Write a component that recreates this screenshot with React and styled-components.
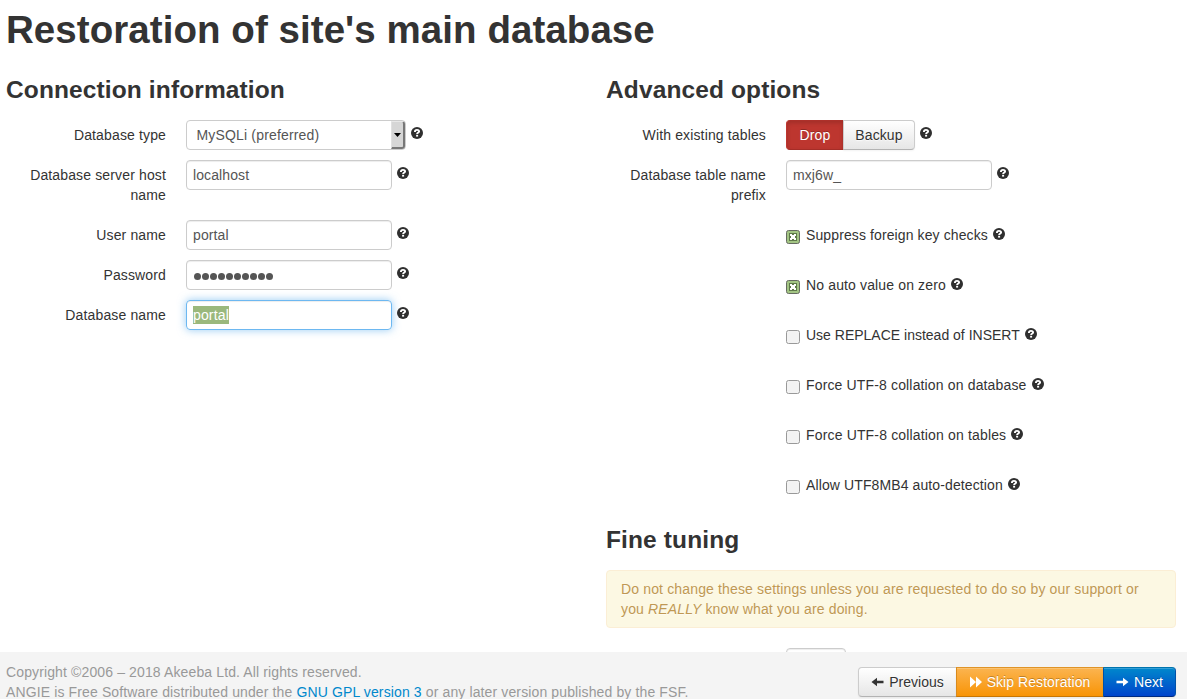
import React from "react";
import styled, { createGlobalStyle, css } from "styled-components";

const Global = createGlobalStyle`
  *, *::before, *::after { box-sizing: border-box; }
  html, body { margin: 0; height: 699px; overflow: hidden; background: #fff; }
  body { font: 14px/20px "Liberation Sans", Arial, sans-serif; color: #333; }
  button, input { font: inherit; }
`;
const Page = styled.div`
  height: 699px;
  display: flex;
  flex-direction: column;
`;
const Main = styled.main`
  flex: none;
  height: 652px;
  overflow: hidden;
  padding: 10px 11px 0 6px;
`;
const Title = styled.h1`
  margin: 0;
  font-size: 38.5px;
  line-height: 40px;
  letter-spacing: 0.06px;
`;
const Columns = styled.div`
  display: grid;
  grid-template-columns: 570px 570px;
  column-gap: 30px;
  margin-top: 20px;
`;
const Heading = styled.h3`
  margin: 0 0 10px;
  font-size: 24.5px;
  line-height: 40px;
  letter-spacing: 0.12px;
`;
const Group = styled.div`
  display: flex;
  align-items: flex-start;
  min-height: 30px;
  margin-bottom: 10px;
`;
const Label = styled.label`
  flex: none;
  width: 160px;
  margin-right: 20px;
  padding-top: 5px;
  padding-bottom: ${(p) => (p.$tall ? 5 : 0)}px;
  text-align: right;
  letter-spacing: 0.14px;
`;
const Field = styled.input`
  width: ${(p) => p.$width || 206}px;
  height: 30px;
  padding: 4px 6px;
  border: 1px solid #ccc;
  border-radius: 4px;
  outline: none;
  background: #fff;
  color: #555;
  letter-spacing: 0.1px;
  box-shadow: inset 0 1px 1px rgba(0, 0, 0, 0.075);
`;
const FocusedField = styled.div`
  width: 206px;
  height: 30px;
  padding: 4px 6px;
  border: 1px solid #6db8f1;
  border-radius: 4px;
  box-shadow: inset 0 1px 1px rgba(0, 0, 0, 0.075), 0 0 8px rgba(82, 168, 236, 0.6);
`;
const Selected = styled.span`
  display: inline-block;
  height: 18px;
  line-height: 18px;
  margin-top: 1px;
  vertical-align: top;
  background: #9ab87c;
  color: #fff;
  letter-spacing: 0.15px;
`;
const Dots = styled.div`
  display: flex;
  align-items: center;
  gap: 1px;
  width: 206px;
  height: 30px;
  padding: 2px 6.5px 0;
  border: 1px solid #ccc;
  border-radius: 4px;
  box-shadow: inset 0 1px 1px rgba(0, 0, 0, 0.075);
`;
const Dot = styled.i`
  width: 7px;
  height: 7px;
  border-radius: 50%;
  background: #555;
`;
const Select = styled.div`
  display: flex;
  justify-content: space-between;
  width: 220px;
  height: 30px;
  padding-left: 9.5px;
  line-height: 28px;
  border: 1px solid #ccc;
  border-radius: 4px;
  color: #555;
  letter-spacing: 0.17px;
`;
const Arrow = styled.span`
  display: flex;
  align-items: center;
  justify-content: center;
  width: 14px;
  height: 28px;
  background: #d6d6d6;
  border: solid;
  border-width: 1px 2px 2px 1px;
  border-color: #e8e8e8 #777 #777 #e0e0e0;
  border-radius: 0 3px 3px 0;
`;
const HelpSvg = styled.svg`
  flex: none;
  display: block;
  width: 12px;
  height: 12px;
  margin: ${(p) => p.$top}px 0 0 ${(p) => p.$left}px;
`;
const ButtonGroup = styled.div`
  display: flex;
`;
const kinds = {
  plain: css`
    color: #333;
    background: linear-gradient(#fff, #e6e6e6);
    border-color: #ccc #ccc #b3b3b3;
    text-shadow: 0 1px 1px rgba(255, 255, 255, 0.75);
  `,
  danger: css`
    background: #bd362f;
    border-color: #ad302a #bd362f #a52d27;
    box-shadow: inset 0 2px 4px rgba(0, 0, 0, 0.15);
  `,
  warning: css`
    background: linear-gradient(#fbb450, #f89406);
    border-color: #df9428 #d98a1c #c67605;
  `,
  primary: css`
    background: linear-gradient(#0088cc, #0044cc);
    border-color: #0074ad #0052a8 #002a80;
  `,
};
const Button = styled.button`
  display: flex;
  align-items: center;
  justify-content: center;
  width: ${(p) => p.$width}px;
  height: 30px;
  padding: 0;
  gap: 5px;
  border: 1px solid;
  color: #fff;
  letter-spacing: ${(p) => p.$spacing || 0}px;
  text-shadow: 0 -1px 0 rgba(0, 0, 0, 0.25);
  box-shadow: inset 0 1px 0 rgba(255, 255, 255, 0.2), 0 1px 2px rgba(0, 0, 0, 0.05);
  white-space: nowrap;
  ${(p) => kinds[p.$kind]}
  & + & { margin-left: -1px; }
  &:first-child { border-radius: 4px 0 0 4px; }
  &:last-child { border-radius: 0 4px 4px 0; }
`;
const CheckRow = styled.label`
  display: flex;
  align-items: flex-start;
  height: 50px;
  padding: 5px 0 0 180px;
  letter-spacing: ${(p) => p.$spacing}px;
`;
const Box = styled.svg`
  flex: none;
  width: 14px;
  height: 14px;
  margin: 5px 6px 0 0;
`;
const Alert = styled.div`
  height: 58px;
  padding: 8px 30px 8px 14px;
  margin-bottom: 20px;
  border: 1px solid #fbeed5;
  border-radius: 4px;
  background: #fcf8e3;
  color: #c09853;
  letter-spacing: 0.15px;
  text-shadow: 0 1px 0 rgba(255, 255, 255, 0.5);
`;
const Offset = styled.div`
  padding-left: 180px;
`;
const Footer = styled.footer`
  flex: none;
  display: flex;
  justify-content: space-between;
  height: 47px;
  padding: 10px 11px 0 6px;
  overflow: hidden;
  background: #f4f4f4;
  color: #999;
`;
const Legal = styled.div`
  letter-spacing: 0.125px;
`;
const Link = styled.a`
  color: #0088cc;
`;
const Actions = styled(ButtonGroup)`
  margin-top: 5px;
`;

function Help({ top = 7, left = 5 }) {
  return (
    <HelpSvg $top={top} $left={left} viewBox="0 0 12 12">
      <circle cx="6" cy="6" r="6" fill="#2f2f2f" />
      <path d="M3.9 4.9C3.9 3.4 4.7 2.9 6 2.9s2.1.6 2.1 1.6C8.1 5.6 6.2 5.5 6.1 7" fill="none" stroke="#fff" strokeWidth="1.9" />
      <path d="M5.1 7.8h2v1.8h-2z" fill="#fff" />
    </HelpSvg>
  );
}
function Check({ checked, spacing, children }) {
  return (
    <CheckRow $spacing={spacing}>
      <Box viewBox="0 0 14 14">
        <rect x=".5" y=".5" width="13" height="13" rx="2" fill={checked ? "#a3c584" : "#f3f3f3"} stroke={checked ? "#666b61" : "#999"} />
        {checked && (
          <>
            <rect x="3" y="3" width="8" height="8" fill="#5f7a4a" />
            <path d="M4 4h2v1h2V4h2v2H9v2h1v2H8V9H6v1H4V8h1V6H4z" fill="#fff" />
          </>
        )}
      </Box>
      <span>{children}</span>
      <Help top={3} />
    </CheckRow>
  );
}
function ArrowIcon({ right }) {
  return (
    <svg width="13" height="10" viewBox="0 0 13 10">
      <path d={right ? "M.5 3.8H7V.8L12.5 5 7 9.2v-3H.5z" : "M12.5 3.8H6V.8L.5 5 6 9.2v-3h6.5z"} fill="currentColor" />
    </svg>
  );
}

export default function App() {
  return (
    <Page>
      <Global />
      <Main>
        <Title>Restoration of site's main database</Title>
        <Columns>
          <section>
            <Heading>Connection information</Heading>
            <Group>
              <Label>Database type</Label>
              <Select>
                MySQLi (preferred)
                <Arrow>
                  <svg width="7" height="4" viewBox="0 0 7 4"><path d="M0 0h7L3.5 4z" /></svg>
                </Arrow>
              </Select>
              <Help />
            </Group>
            <Group>
              <Label $tall>Database server host name</Label>
              <Field defaultValue="localhost" />
              <Help />
            </Group>
            <Group>
              <Label>User name</Label>
              <Field defaultValue="portal" />
              <Help />
            </Group>
            <Group>
              <Label>Password</Label>
              <Dots>{Array.from({ length: 10 }, (_, i) => <Dot key={i} />)}</Dots>
              <Help />
            </Group>
            <Group>
              <Label>Database name</Label>
              <FocusedField><Selected>portal</Selected></FocusedField>
              <Help />
            </Group>
          </section>
          <section>
            <Heading>Advanced options</Heading>
            <Group>
              <Label>With existing tables</Label>
              <ButtonGroup>
                <Button $kind="danger" $width={58} $spacing={0.2}>Drop</Button>
                <Button $kind="plain" $width={72} $spacing={0.1}>Backup</Button>
              </ButtonGroup>
              <Help />
            </Group>
            <Group>
              <Label $tall>Database table name prefix</Label>
              <Field defaultValue="mxj6w_" />
              <Help />
            </Group>
            <div>
              <Check checked spacing={0.11}>Suppress foreign key checks</Check>
              <Check checked spacing={0.14}>No auto value on zero</Check>
              <Check spacing={0}>Use REPLACE instead of INSERT</Check>
              <Check spacing={0.15}>Force UTF-8 collation on database</Check>
              <Check spacing={0.16}>Force UTF-8 collation on tables</Check>
              <Check spacing={0.11}>Allow UTF8MB4 auto-detection</Check>
            </div>
            <Heading>Fine tuning</Heading>
            <Alert>
              Do not change these settings unless you are requested to do so by our support or you <em>REALLY</em> know what you are doing.
            </Alert>
            <Offset><Field $width={60} /></Offset>
          </section>
        </Columns>
      </Main>
      <Footer>
        <Legal>
          Copyright ©2006 – 2018 Akeeba Ltd. All rights reserved.
          <br />
          ANGIE is Free Software distributed under the <Link>GNU GPL version 3</Link> or any later version published by the FSF.
        </Legal>
        <Actions>
          <Button $kind="plain" $width={99}><ArrowIcon />Previous</Button>
          <Button $kind="warning" $width={148} $spacing={0.06}>
            <svg width="12" height="12" viewBox="0 0 12 12"><path d="M0 .5L6 6l-6 5.5zM6 .5L12 6l-6 5.5z" fill="#fff" /></svg>
            Skip Restoration
          </Button>
          <Button $kind="primary" $width={73}><ArrowIcon right />Next</Button>
        </Actions>
      </Footer>
    </Page>
  );
}
